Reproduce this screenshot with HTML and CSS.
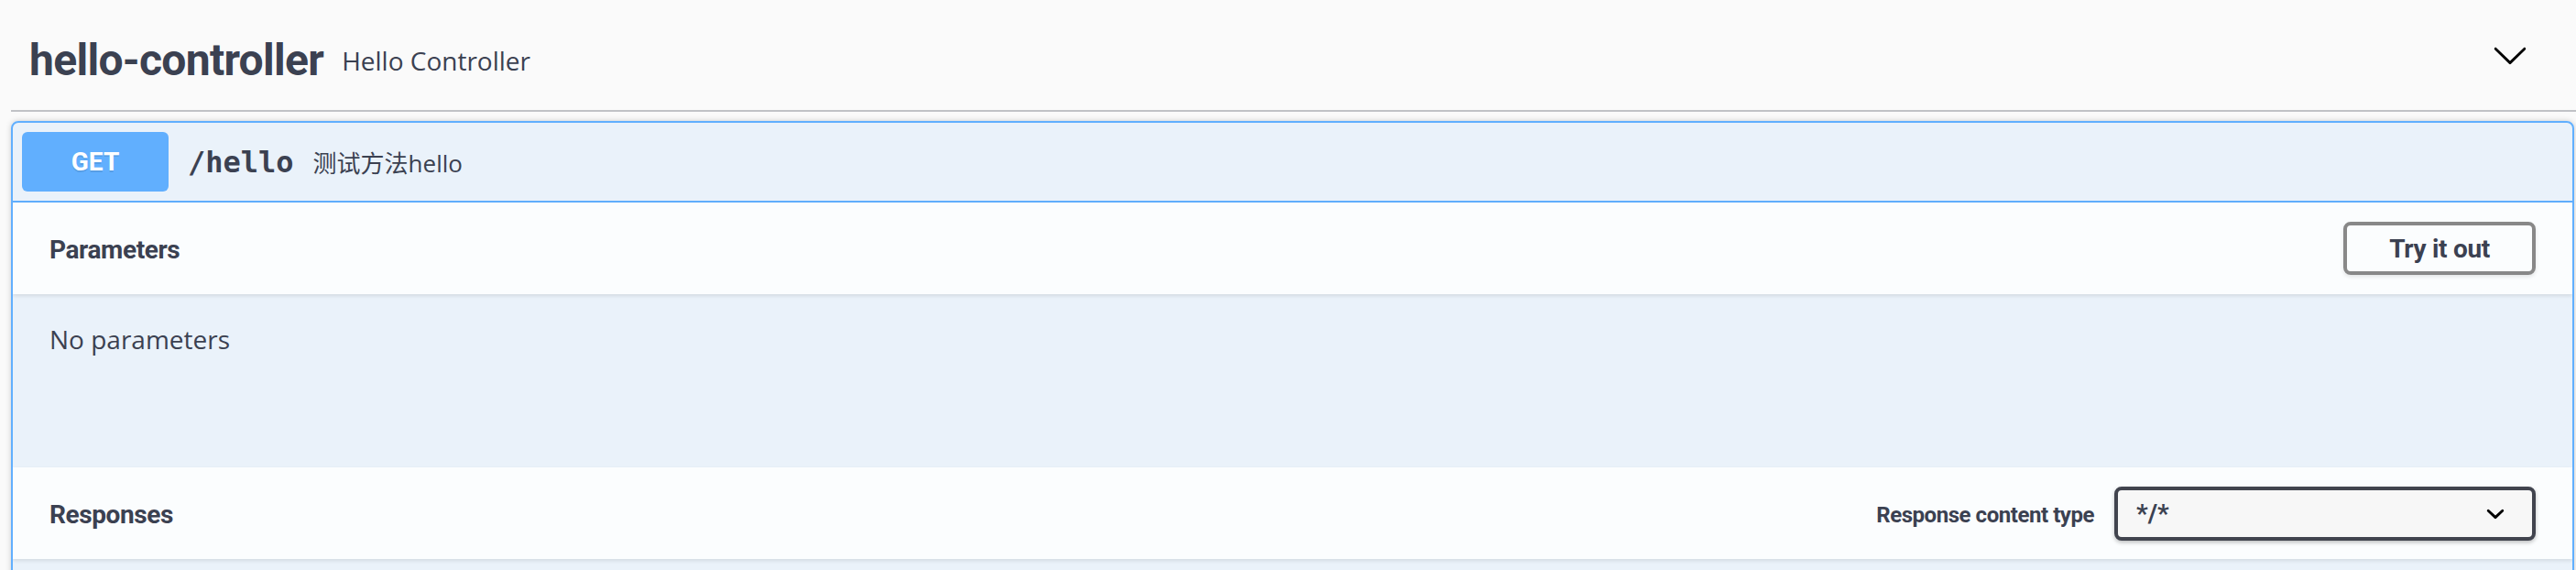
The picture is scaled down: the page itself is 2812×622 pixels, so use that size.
FILE: index.html
```html
<!DOCTYPE html>
<html lang="en">
<head>
<meta charset="utf-8">
<title>hello-controller</title>
<link rel="stylesheet" href="styles.css">
</head>
<body>
<div class="page">
  <div class="tag-section">
    <h4 class="tag">
      <span class="tag-name">hello-controller</span>
      <small class="tag-desc">Hello Controller</small>
      <button class="expand" type="button">
        <svg width="40" height="40" viewBox="0 0 20 20"><path fill="#000" d="M17.418 6.109c.272-.268.709-.268.979 0s.271.701 0 .969l-7.908 7.83c-.27.268-.707.268-.979 0l-7.908-7.830c-.27-.268-.27-.701 0-.969.271-.268.709-.268.979 0L10 13.25l7.418-7.141z"/></svg>
      </button>
    </h4>
    <div class="opblock">
      <div class="summary">
        <span class="method">GET</span>
        <span class="path">/hello</span>
        <div class="desc">测试方法hello</div>
      </div>
      <div class="section-header">
        <h4 class="section-title">Parameters</h4>
        <button class="try-btn" type="button">Try it out</button>
      </div>
      <div class="params-body">
        <p>No parameters</p>
      </div>
      <div class="section-header">
        <h4 class="section-title">Responses</h4>
        <label class="ct-label">Response content type</label>
        <div class="select">
          <span>*/*</span>
          <svg width="40" height="31" viewBox="0 2.25 20 15.5"><path fill="#000" d="M13.418 7.859a.695.695 0 01.978 0 .68.68 0 010 .969l-3.908 3.83a.697.697 0 01-.979 0l-3.908-3.83a.68.68 0 010-.969.695.695 0 01.978 0L10 11z"/></svg>
        </div>
      </div>
      <div class="responses-body"></div>
    </div>
  </div>
</div>
</body>
</html>
```
FILE: styles.css
```css
html, body {
  margin: 0;
  padding: 0;
  background: #fafafa;
}
body {
  padding-left: 12px;
  overflow: hidden;
  color: #3b4151;
}
.page {
  width: 100%;
}
.tag {
  display: flex;
  align-items: center;
  box-sizing: border-box;
  height: 122px;
  margin: 0 0 10px;
  padding: 11px 40px 0 20px;
  border-bottom: 2px solid rgba(59, 65, 81, 0.3);
}
.tag-name {
  font-family: Roboto, "Liberation Sans", sans-serif;
  font-weight: 700;
  font-size: 48px;
  line-height: normal;
  color: #3b4151;
  letter-spacing: -0.7px;
}
.tag-desc {
  flex: 1;
  padding: 0 20px;
  font-family: "Open Sans", "Liberation Sans", sans-serif;
  font-weight: 400;
  font-size: 28px;
  line-height: normal;
  color: #3b4151;
}
.expand {
  border: none;
  background: none;
  padding: 0 12px;
  margin: 0 0 11px;
  cursor: pointer;
}
.expand svg {
  display: block;
}
.opblock {
  margin-right: 2px;
  border: 2px solid #61affe;
  border-radius: 8px;
  background: rgba(97, 175, 254, 0.1);
  box-shadow: 0 0 6px rgba(0, 0, 0, 0.19);
  overflow: hidden;
}
.summary {
  display: flex;
  align-items: center;
  padding: 10px;
  border-bottom: 2px solid #61affe;
}
.method {
  box-sizing: border-box;
  min-width: 160px;
  padding: 12px 30px;
  border-radius: 6px;
  background: #61affe;
  color: #fff;
  text-align: center;
  font-family: Roboto, "Liberation Sans", sans-serif;
  font-weight: 700;
  font-size: 28px;
  line-height: 41px;
  text-shadow: 0 2px 0 rgba(0, 0, 0, 0.1);
}
.path {
  padding: 0 21px;
  font-family: "DejaVu Sans Mono", "Liberation Mono", monospace;
  font-weight: 700;
  font-size: 32px;
  color: #3b4151;
}
.desc {
  flex: 1;
  font-family: "Open Sans", "Noto Sans CJK SC", sans-serif;
  font-size: 26px;
  color: #3b4151;
}
.section-header {
  display: flex;
  align-items: center;
  box-sizing: border-box;
  min-height: 100px;
  padding: 16px 40px;
  background: rgba(255, 255, 255, 0.8);
  box-shadow: 0 2px 4px rgba(0, 0, 0, 0.1);
}
.section-title {
  flex: 1;
  margin: 0;
  padding-top: 3px;
  font-family: Roboto, "Liberation Sans", sans-serif;
  font-weight: 700;
  font-size: 28px;
  color: #3b4151;
  letter-spacing: -0.4px;
}
.try-btn {
  padding: 11px 46px 9px;
  border: 4px solid #888;
  border-radius: 8px;
  background: transparent;
  box-shadow: 0 2px 4px rgba(0, 0, 0, 0.1);
  font-family: Roboto, "Liberation Sans", sans-serif;
  font-weight: 700;
  font-size: 28px;
  line-height: 30px;
  color: #3b4151;
  letter-spacing: -0.3px;
}
.params-body {
  box-sizing: border-box;
  min-height: 189px;
  padding: 30px 40px;
}
.params-body p {
  margin: 0;
  font-family: "Open Sans", "Liberation Sans", sans-serif;
  font-size: 28px;
  line-height: normal;
  color: #3b4151;
}
.ct-label {
  margin-right: 22px;
  padding-top: 3px;
  font-family: Roboto, "Liberation Sans", sans-serif;
  font-weight: 700;
  font-size: 24px;
  color: #3b4151;
  letter-spacing: -0.45px;
}
.select {
  display: flex;
  align-items: center;
  justify-content: space-between;
  box-sizing: border-box;
  width: 460px;
  padding: 10px 20px;
  border: 4px solid #41444e;
  border-radius: 8px;
  background: #f7f7f7;
  box-shadow: 0 2px 4px rgba(0, 0, 0, 0.25);
  font-family: Roboto, "Liberation Sans", sans-serif;
  font-weight: 700;
  font-size: 28px;
  line-height: 31px;
  color: #3b4151;
}
.select svg {
  display: block;
}
.responses-body {
  min-height: 100px;
}
```
